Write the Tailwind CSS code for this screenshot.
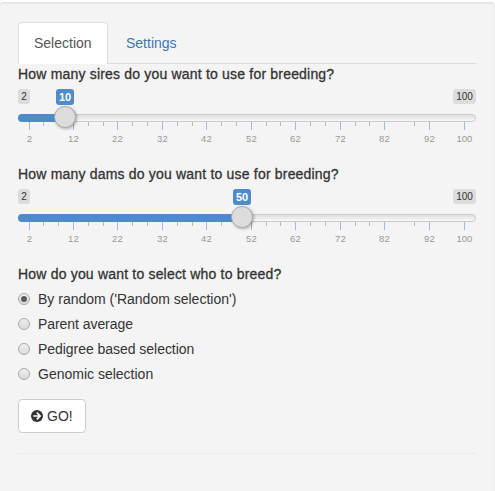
<!DOCTYPE html>
<html lang="en">
<head>
<meta charset="utf-8">
<title>Breeding selection</title>
<script src="https://cdn.jsdelivr.net/npm/@tailwindcss/browser@4"></script>
</head>
<body class="bg-white pt-[2px] h-[491px] overflow-hidden text-[14px] leading-[20px] text-[#333] font-['Liberation_Sans',Arial,sans-serif]">
<main class="w-[495px] h-[509px] border border-l-0 border-[#e3e3e3] border-r-[#ececec] rounded-[4px] bg-[#f4f4f4] shadow-[inset_0_1px_1px_rgba(0,0,0,0.05)] pl-[18px] pr-[18px] pt-[19px]">
  <nav class="flex h-[42px] border-b border-[#ddd]">
    <a class="h-[42px] w-[90px] shrink-0 border border-b-0 border-[#ddd] rounded-t-[4px] bg-white text-[#555] pl-[15px] pt-[10px]">Selection</a>
    <a class="text-[#3c76b5] pl-[18px] pt-[11px]">Settings</a>
  </nav>

  <section class="h-[100px]">
    <h2 class="h-[20px] whitespace-nowrap [-webkit-text-stroke:0.3px_#333] tracking-[0.19px]">How many sires do you want to use for breeding?</h2>
    <div class="relative mt-[5px] h-[60px]" data-slider="47"></div>
  </section>
  <section class="h-[100px]">
    <h2 class="h-[20px] whitespace-nowrap [-webkit-text-stroke:0.3px_#333] tracking-[0.19px]">How many dams do you want to use for breeding?</h2>
    <div class="relative mt-[5px] h-[60px]" data-slider="224"></div>
  </section>

  <section>
    <h2 class="h-[25px] whitespace-nowrap [-webkit-text-stroke:0.3px_#333] tracking-[0.19px]">How do you want to select who to breed?</h2>
    <div class="flex flex-col gap-[5px]">
      <label class="flex h-[20px] items-center gap-[8px]"><span class="flex size-[12px] items-center justify-center rounded-full border border-[#aaa] bg-linear-to-b from-[#efefef] to-[#dadada]"><i class="size-[6px] rounded-full bg-[#5e5e5e]"></i></span>By random ('Random selection')</label>
      <label class="flex h-[20px] items-center gap-[8px] tracking-[-0.06px]"><span class="size-[12px] rounded-full border border-[#aaa] bg-linear-to-b from-[#efefef] to-[#dadada]"></span>Parent average</label>
      <label class="flex h-[20px] items-center gap-[8px] tracking-[-0.04px]"><span class="size-[12px] rounded-full border border-[#aaa] bg-linear-to-b from-[#efefef] to-[#dadada]"></span>Pedigree based selection</label>
      <label class="flex h-[20px] items-center gap-[8px]"><span class="size-[12px] rounded-full border border-[#aaa] bg-linear-to-b from-[#efefef] to-[#dadada]"></span>Genomic selection</label>
    </div>
  </section>

  <button class="mt-[15px] flex h-[34px] w-[68px] items-center rounded-[4px] border border-[#ccc] bg-white pl-[12px] gap-[4px]">
    <svg class="size-[12px] shrink-0" viewBox="0 0 12 12"><circle cx="6" cy="6" r="6" fill="#333"/><path d="M2.3 6H8.7M5.8 2.7L9.1 6L5.8 9.3" fill="none" stroke="#fff" stroke-width="1.7"/></svg>
    <span>GO!</span>
  </button>
  <hr class="mt-[20px] border-t border-[#ebebeb]">
</main>

<template id="slider">
  <span class="absolute left-0 top-0 h-[15px] w-[12px] rounded-[3px] bg-[#dcdcdc] text-center text-[10px] leading-[15px]">2</span>
  <span class="absolute right-0 top-0 h-[15px] w-[23px] rounded-[3px] bg-[#dcdcdc] text-center text-[10px] leading-[15px] tracking-[-0.1px]">100</span>
  <div class="absolute left-0 top-[25px] h-[8px] w-[458px] rounded-[4px] border border-[#ccc] bg-linear-to-b from-[#dedede] to-[#f8f8f8]"></div>
  <div data-fill class="absolute left-0 top-[25px] h-[8px] rounded-l-[4px] bg-[#4f8bc9]"></div>
  <svg class="absolute left-0 top-[33px] h-[27px] w-[458px]" shape-rendering="crispEdges"></svg>
  <span data-value class="absolute top-0 h-[16px] w-[18px] -translate-x-1/2 rounded-[3px] bg-[#4f8bc9] text-center text-[11px] font-bold leading-[16px] text-white"></span>
  <i data-handle class="absolute top-[17px] size-[22px] -translate-x-1/2 rounded-full border border-[#ababab] bg-[#dcdcdc] shadow-[1px_1px_3px_rgba(0,0,0,0.3)]"></i>
</template>
<script>
const major = [11, 55, 99, 144, 188, 233, 277, 322, 366, 411, 446];
const minor = [25, 40, 70, 85, 114, 129, 159, 174, 203, 218, 248, 262, 292, 307, 337, 351, 396];
const names = [2, 12, 22, 32, 42, 52, 62, 72, 82, 92, 100];
document.querySelectorAll('[data-slider]').forEach((el, i) => {
  const x = Number(el.dataset.slider);
  el.append(document.getElementById('slider').content.cloneNode(true));
  el.querySelector('[data-fill]').style.width = x + 'px';
  const value = el.querySelector('[data-value]');
  value.textContent = i ? 50 : 10;
  value.style.left = x + 'px';
  el.querySelector('[data-handle]').style.left = x + 'px';
  el.querySelector('svg').innerHTML =
    minor.map(v => `<rect x="${v}" y="0" width="1" height="4" fill="#b9b9b9"/>`).join('') +
    major.map((v, n) => `<rect x="${v}" y="0" width="1" height="8" fill="#9bbbdd"/><text x="${v + .4}" y="20" text-anchor="middle" font-size="9.5" fill="#999">${names[n]}</text>`).join('');
});
</script>
</body>
</html>
